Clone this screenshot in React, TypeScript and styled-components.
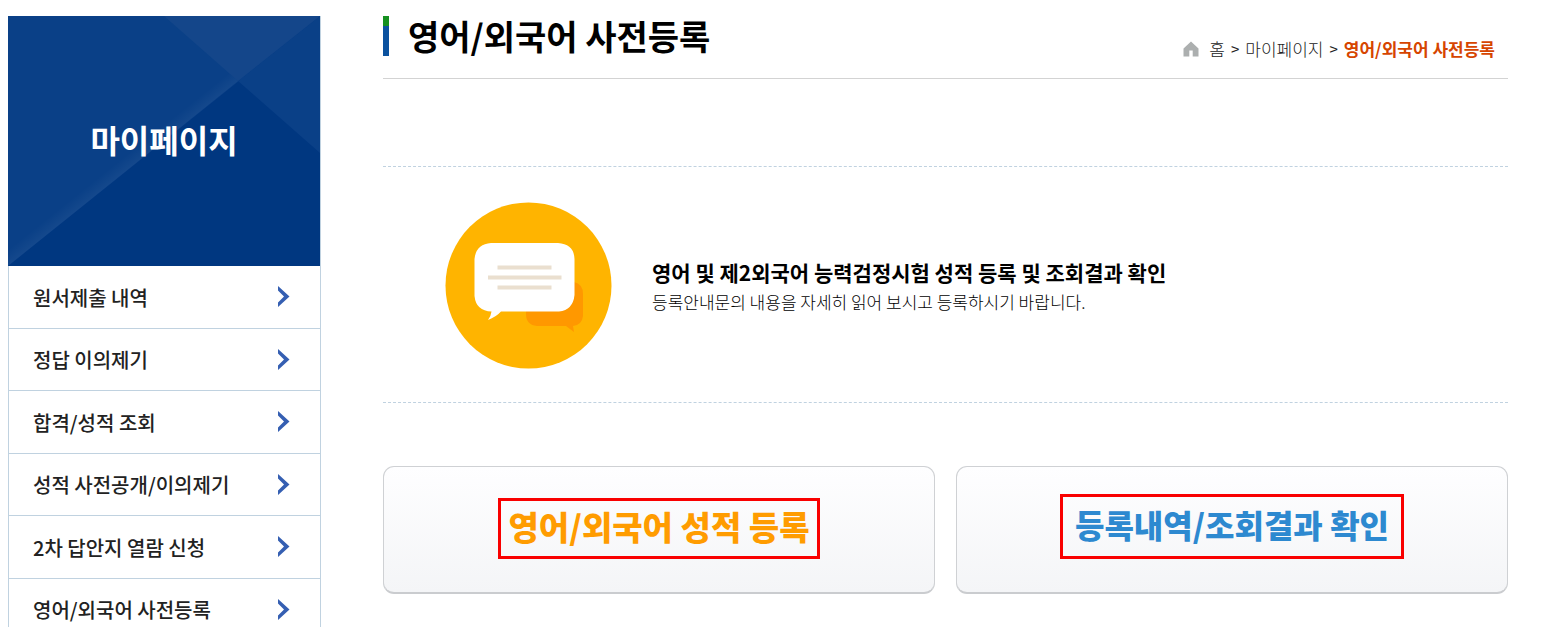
import React from "react";
import styled, { createGlobalStyle } from "styled-components";

const GlobalStyle = createGlobalStyle`
  * { box-sizing: border-box; }
  body {
    margin: 0;
    background: #fff;
    color: #000;
    font-family: "Noto Sans CJK KR", "Liberation Sans", sans-serif;
  }
  h1, h2, p, ul, ol { margin: 0; padding: 0; }
  ul, ol { list-style: none; }
  a { color: inherit; text-decoration: none; }
`;

const Page = styled.div`
  display: flex;
  align-items: flex-start;
  gap: 62px;
  padding: 16px 45px 0 8px;
`;

const Sidebar = styled.aside`
  flex: 0 0 313px;
  border-right: 1px solid #c0d2e0;
`;

const Banner = styled.div`
  display: grid;
  height: 250px;
  background: #003780;
  overflow: hidden;

  > * { grid-area: 1 / 1; }
`;

const BannerArt = styled.svg`
  display: block;
  width: 100%;
  height: 250px;
`;

const BannerTitle = styled.h2`
  align-self: center;
  padding-bottom: 5px;
  text-align: center;
  color: #fff;
  font-size: 32px;
  font-weight: 700;
  line-height: 48px;
`;

const Menu = styled.ul`
  border-left: 1px solid #c0d2e0;
`;

const MenuItem = styled.li`
  height: 63px;
  border-bottom: 1px solid #c0d2e0;

  &:nth-child(even) { height: 62px; }
`;

const MenuLink = styled.a`
  display: flex;
  align-items: center;
  justify-content: space-between;
  height: 100%;
  padding: 0 30px 0 24px;
  color: #222;
  font-size: 20px;
  font-weight: 500;
`;

const Main = styled.main`
  flex: 1;
  min-width: 0;
`;

const Header = styled.header`
  display: flex;
  justify-content: space-between;
  height: 63px;
  border-bottom: 1px solid #d3d3d3;
`;

const Title = styled.h1`
  height: 40px;
  padding-left: 19px;
  border-left: 6px solid;
  border-image: linear-gradient(#159020 0 25%, #0b529f 25%) 0 0 0 1;
  font-size: 34px;
  font-weight: 700;
  line-height: 39px;
`;

const Crumbs = styled.ol`
  display: flex;
  align-items: center;
  gap: 6px;
  height: 24px;
  margin: 21px 13px 0 0;
  font-size: 17px;
  font-weight: 300;
  line-height: 24px;
  color: #222;
`;

const Crumb = styled.li<{ $current?: boolean }>`
  display: flex;
  align-items: center;
  gap: 10px;
  color: ${(p) => (p.$current ? "#d64500" : "inherit")};
  font-weight: ${(p) => (p.$current ? 700 : 300)};
`;

const Separator = styled.li`
  font-size: 15px;
  font-weight: 400;
`;

const Notice = styled.section`
  display: flex;
  align-items: center;
  gap: 40px;
  height: 237px;
  margin-top: 87px;
  padding: 2px 0 0 62px;
  border-top: 1px dashed #c0d2e0;
  border-bottom: 1px dashed #c0d2e0;
`;

const NoticeTitle = styled.h2`
  font-size: 21px;
  font-weight: 700;
  line-height: 32px;
`;

const NoticeText = styled.p`
  font-size: 17px;
  font-weight: 300;
  line-height: 28px;
`;

const Cards = styled.div`
  display: grid;
  grid-template-columns: 1fr 1fr;
  gap: 21px;
  margin-top: 63px;
`;

const Card = styled.button`
  display: flex;
  align-items: flex-end;
  justify-content: center;
  height: 128px;
  padding: 0 0 33px;
  border: 1px solid #cfd1d4;
  border-bottom: 2px solid #cacccf;
  border-radius: 11px;
  background: linear-gradient(#fefeff, #f4f5f7);
  font-family: inherit;
  cursor: pointer;
`;

const CardLabel = styled.span<{ $color: string; $wide?: boolean }>`
  padding: ${(p) => (p.$wide ? "5px 12px 10px" : "3px 7px 8px")};
  border: 3px solid #f90000;
  color: ${(p) => p.$color};
  font-size: ${(p) => (p.$wide ? 32 : 33)}px;
  font-weight: 900;
  line-height: 44px;
  white-space: nowrap;
`;

const menu = [
  "원서제출 내역",
  "정답 이의제기",
  "합격/성적 조회",
  "성적 사전공개/이의제기",
  "2차 답안지 열람 신청",
  "영어/외국어 사전등록",
];

const Chevron = () => (
  <svg width="13" height="22" viewBox="0 0 13 22" aria-hidden="true">
    <path d="M1 0V4.5L7 10.500L1 16.500V21L12.500 10.500Z" fill="#355fb2" />
  </svg>
);

const HomeIcon = () => (
  <svg width="16" height="16" viewBox="0 0 16 16" aria-hidden="true">
    <path d="M8 0.5L15.5 7.5V15.5H9.7V9.500H6.3V15.5H0.5V7.5Z" fill="#acafaf" />
  </svg>
);

const ChatIcon = () => (
  <svg width="167" height="167" viewBox="0 0 167 167" aria-hidden="true">
    <circle cx="83.500" cy="83.500" r="83" fill="#ffb400" />
    <path
      d="M90 80H129Q138 82 138 92V114Q137 123 128 124L129 130L121 124H92Q81 123 81 112V89Q82 81 90 80Z"
      fill="#ff9800"
    />
    <path
      d="M46 41H113Q129 42 129.500 57V93Q128 108 114 109.500H56Q51 115 43 118Q46 114 46.500 109.500Q31 109 29.500 94V57Q31 42 46 41Z"
      fill="#fff"
    />
    <path d="M52.500 65.500H106.500M43 75.500H116.500M52.500 85.500H106.500" stroke="#eadfcf" strokeWidth="4" />
  </svg>
);

const Facets = () => (
  <BannerArt viewBox="0 0 312 250" preserveAspectRatio="none" aria-hidden="true">
    <defs>
      <linearGradient id="sheen" gradientUnits="userSpaceOnUse" x1="115" y1="158" x2="107" y2="148">
        <stop offset="0" stopColor="#fff" stopOpacity="0.045" />
        <stop offset="1" stopColor="#fff" stopOpacity="0" />
      </linearGradient>
    </defs>
    <path d="M0 0H312L0 250Z" fill="#0a4087" />
    <path d="M0 250L230 65L216 48L0 220Z" fill="url(#sheen)" />
    <path d="M312 0V137L230 65Z" fill="#0a4087" />
    <path d="M156 0H312L230 65Z" fill="#14468a" />
  </BannerArt>
);

export default function App() {
  return (
    <>
      <GlobalStyle />
      <Page>
        <Sidebar>
          <Banner>
            <Facets />
            <BannerTitle>마이페이지</BannerTitle>
          </Banner>
          <nav aria-label="마이페이지">
            <Menu>
              {menu.map((label) => (
                <MenuItem key={label}>
                  <MenuLink href="#">
                    {label}
                    <Chevron />
                  </MenuLink>
                </MenuItem>
              ))}
            </Menu>
          </nav>
        </Sidebar>
        <Main>
          <Header>
            <Title>영어/외국어 사전등록</Title>
            <nav>
              <Crumbs>
                <Crumb>
                  <HomeIcon />
                  <a href="#">홈</a>
                </Crumb>
                <Separator>&gt;</Separator>
                <Crumb>
                  <a href="#">마이페이지</a>
                </Crumb>
                <Separator>&gt;</Separator>
                <Crumb $current aria-current="page">
                  영어/외국어 사전등록
                </Crumb>
              </Crumbs>
            </nav>
          </Header>
          <Notice>
            <ChatIcon />
            <div>
              <NoticeTitle>영어 및 제2외국어 능력검정시험 성적 등록 및 조회결과 확인</NoticeTitle>
              <NoticeText>등록안내문의 내용을 자세히 읽어 보시고 등록하시기 바랍니다.</NoticeText>
            </div>
          </Notice>
          <Cards>
            <Card type="button">
              <CardLabel $color="#ff9c00">영어/외국어 성적 등록</CardLabel>
            </Card>
            <Card type="button">
              <CardLabel $color="#2d89d0" $wide>
                등록내역/조회결과 확인
              </CardLabel>
            </Card>
          </Cards>
        </Main>
      </Page>
    </>
  );
}
